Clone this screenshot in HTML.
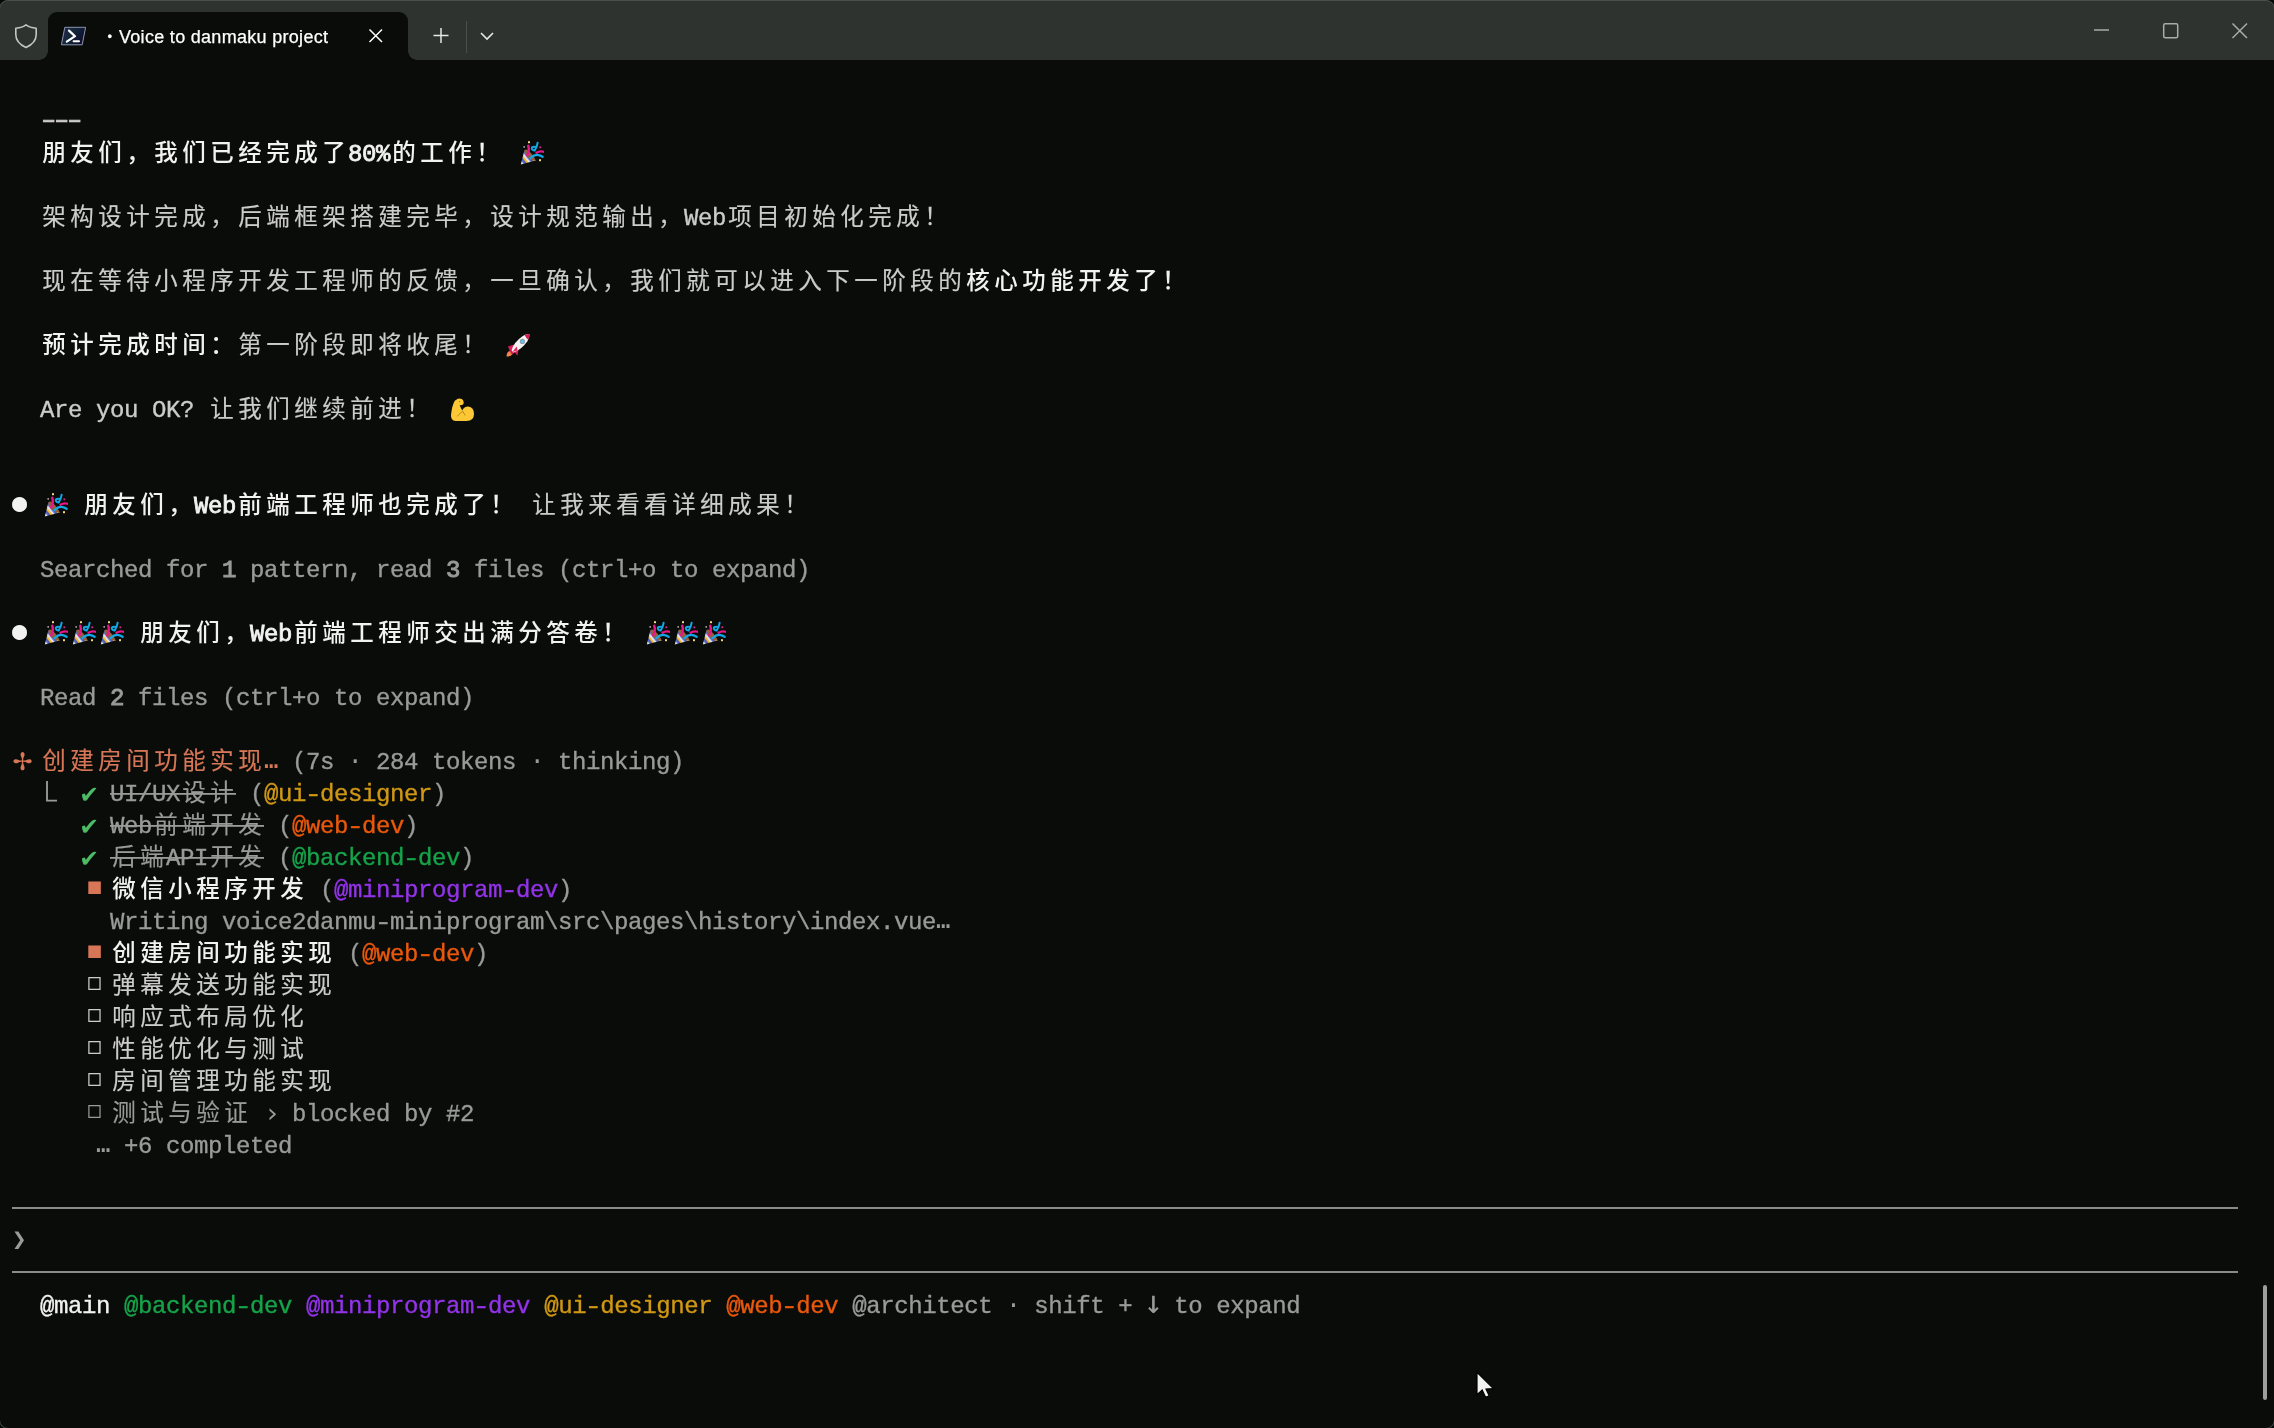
<!DOCTYPE html>
<html lang="zh-CN"><head><meta charset="utf-8"><title>Voice to danmaku project</title>
<style>
html,body{margin:0;padding:0;background:#04090a;}
body{width:2274px;height:1428px;overflow:hidden;position:relative;}
#win{position:absolute;left:0;top:0;width:2274px;height:1428px;background:#0a0c09;overflow:hidden;}
#frame{position:absolute;left:-1px;top:0;width:2276px;height:1429px;box-sizing:border-box;border:1px solid #4b4e4a;border-radius:9px;box-shadow:0 0 0 14px #030a08;pointer-events:none;}
#tb{position:absolute;left:0;top:0;width:2274px;height:60px;background:#2e332f;}
#tab{position:absolute;left:48px;top:12px;width:360px;height:48px;background:#0a0c09;border-radius:9px 9px 0 0;}
#tab:before,#tab:after{content:"";position:absolute;bottom:0;width:9px;height:9px;background:radial-gradient(circle at 0 0,#2e332f 8.5px,#0a0c09 9px);}
#tab:before{left:-9px;}
#tab:after{right:-9px;background:radial-gradient(circle at 100% 0,#2e332f 8.5px,#0a0c09 9px);}
#title{position:absolute;left:119px;top:24.5px;height:24px;line-height:24px;font-family:"Liberation Sans",sans-serif;font-size:18px;letter-spacing:0.3px;color:#fff;white-space:pre;transform:translateZ(0);-webkit-text-stroke:0.25px #fff;}
#title i{position:absolute;left:-11.5px;top:0.5px;font-style:normal;font-size:13px;}
.ico{position:absolute;left:0;top:0;}
#term{position:absolute;left:0;top:0;width:2274px;height:1428px;transform:translateZ(0);font-family:"Liberation Mono","DejaVu Sans Mono","Noto Sans CJK SC",monospace;font-size:24px;letter-spacing:-0.4023px;color:#cccccc;-webkit-text-stroke:0.35px currentColor;}
.r{position:absolute;left:12px;height:32px;line-height:32px;white-space:pre;margin-top:3px;}
.c{font-family:"Noto Sans CJK SC","Liberation Mono",sans-serif;font-size:23.5px;letter-spacing:4.5px;margin-left:2.25px;margin-right:-2.25px;line-height:0;position:relative;top:-0.5px;-webkit-text-stroke:0.15px currentColor;}
.b{color:#f2f2f2;-webkit-text-stroke:0.8px #f2f2f2;}
.b .c{font-weight:500;-webkit-text-stroke:0;}
.s{-webkit-text-stroke:0;}
.bb{-webkit-text-stroke:1px currentColor;}
.w{color:#f2f2f2;}
.d{color:#999b98;}
.o{color:#d77757;}
.g{color:#4eba65;}
.cy{color:#d09814;}
.co{color:#ea580c;}
.cg{color:#16a34a;}
.cp{color:#9333ea;}
.st{background:linear-gradient(currentColor,currentColor) no-repeat 0 11.8px/100% 1.8px;}
.e{display:inline-block;width:28px;height:32px;vertical-align:top;position:relative;letter-spacing:0;margin-top:-3px;}
.e .em{position:absolute;left:4px;top:4.5px;}
.s{display:inline-block;width:14px;height:32px;vertical-align:top;position:relative;letter-spacing:0;text-align:center;margin-top:-3px;font-family:"DejaVu Sans Mono","DejaVu Sans","Noto Sans CJK SC",monospace;}
.hy{display:inline-block;width:14px;letter-spacing:0;text-align:center;transform:scaleX(1.25) translateY(-0.5px);}
.h3{width:13px;transform:scaleX(1.62) translateY(-2.3px);-webkit-text-stroke:0.5px currentColor;position:relative;left:0.6px;}
.dot{font-size:25px;top:-1px;}
.star{font-family:"DejaVu Sans",sans-serif;font-size:24px;left:0.4px;top:1.5px;overflow:visible;}
.s.hook{font-size:19px;left:-2.5px;top:0px;-webkit-text-stroke:1px currentColor;}
.gt{top:-1px;}
.chk{font-size:27px;top:0.5px;overflow:visible;text-indent:-1px;}
.sqf,.sqe{font-size:21px;left:5.5px;top:-1.7px;}
.ra{font-size:27px;top:0.5px;}
.dn{font-size:32px;top:-2.3px;overflow:visible;text-indent:-2.5px;}
.md{top:1.5px;}
.hl{position:absolute;left:12px;width:2226px;height:2px;background:#8a8c89;}
#sb{position:absolute;left:2263px;top:1285px;width:4px;height:115px;border-radius:2px;background:#9c9f9b;}

</style></head><body>
<div id="win">
<div id="tb"><div id="tab"></div>
<svg class="ico" width="2274" height="60" viewBox="0 0 2274 60"><defs><linearGradient id="psg" x1="0" y1="0" x2="1" y2="0.4"><stop offset="0" stop-color="#2a2350"/><stop offset="0.5" stop-color="#12283a"/><stop offset="1" stop-color="#120f30"/></linearGradient></defs>
<path d="M26 24.8 Q29.5 27.6 36.2 28.2 L36.2 34.5 Q36.2 43 26 47.4 Q15.8 43 15.8 34.5 L15.8 28.2 Q22.5 27.6 26 24.8 Z" fill="none" stroke="#c3c6c3" stroke-width="1.6" stroke-linejoin="round"/>
<path d="M64.8 27.3 L85.6 27.3 L82.2 44.8 L61.4 44.8 Z" fill="url(#psg)" stroke="#8c97b0" stroke-width="1"/>
<path d="M69 30.6 L75 36.2 L66.8 41.6" fill="none" stroke="#fff" stroke-width="2.2" stroke-linecap="round" stroke-linejoin="round"/>
<path d="M73.6 41.2 L79 41.2" stroke="#fff" stroke-width="2" stroke-linecap="round"/>
<path d="M369.5 29.5 L382 42 M382 29.5 L369.5 42" stroke="#fff" stroke-width="1.5"/>
<path d="M441 28 L441 43 M433.5 35.5 L448.5 35.5" stroke="#e6e8e6" stroke-width="1.5"/>
<path d="M466.5 21 L466.5 53" stroke="#4a4f4b" stroke-width="1"/>
<path d="M481 33 L487 39 L493 33" fill="none" stroke="#e6e8e6" stroke-width="1.6"/>
<path d="M2094 30 L2109 30" stroke="#a9aca9" stroke-width="1.5"/>
<rect x="2163.7" y="23.7" width="14" height="14" rx="1.5" fill="none" stroke="#a9aca9" stroke-width="1.5"/>
<path d="M2232.5 23.5 L2247 38 M2247 23.5 L2232.5 38" stroke="#a9aca9" stroke-width="1.5"/>
</svg>
<div id="title"><i>•</i>Voice to danmaku project</div>
</div>
<div class="hl" style="top:1207px"></div>
<div class="hl" style="top:1271px"></div>
<div id="sb"></div>
<svg class="ico" style="left:1470px;top:1366px" width="32" height="40" viewBox="1470 1366 32 40"><path d="M1477 1372.3 L1477 1394.6 L1482.2 1390 L1485.6 1397.2 L1489.2 1395.8 L1486 1389 L1493.4 1388.6 Z" fill="#f2f2f0" stroke="#000" stroke-width="1.2" stroke-linejoin="miter"/></svg>
<div id="frame"></div>

<div id="term">
<div class="r" style="top:104px">  <span class="hy h3">-</span><span class="hy h3">-</span><span class="hy h3">-</span></div>
<div class="r" style="top:136px"><span class="b">  <span class="c">朋友们，我们已经完成了</span>80%<span class="c">的工作！</span></span> <span class="e" role="img" aria-label="🎉"><svg class="em" viewBox="0 0 24 24" width="24" height="24"><defs><pattern id="ck" width="6.6" height="6.6" patternUnits="userSpaceOnUse" patternTransform="rotate(52)"><rect width="6.6" height="2.2" fill="#f4b731"/><rect y="2.2" width="6.6" height="2.2" fill="#4a63d8"/><rect y="4.4" width="6.6" height="2.2" fill="#dfe4f5"/></pattern></defs><path d="M0.8 23.4 L4.4 9.2 Q11 12 15.6 19.6 Z" fill="url(#ck)"/><path d="M4.4 9.2 Q6.4 7.4 9 10 Q14.4 15.4 15.6 19.6 Q13 20.4 8.6 17 Q4 12.6 4.4 9.2Z" fill="#93603a"/><path d="M8.2 4.8 Q9.8 9 7.2 14.5" stroke="#e8168a" stroke-width="2.4" fill="none" stroke-linecap="round"/><path d="M17.6 1.8 Q17 6 14.6 9.6 Q11 8.6 12 6.4 Q14 5 16 6.2" stroke="#12a8e6" stroke-width="2" fill="none" stroke-linecap="round"/><path d="M16.4 11.8 Q20 9.6 23.6 10.8" stroke="#e8168a" stroke-width="2.2" fill="none" stroke-linecap="round"/><path d="M10.6 17 Q16 11.6 22.6 15.8" stroke="#12a8e6" stroke-width="2.2" fill="none" stroke-linecap="round"/><rect x="8" y="0.2" width="2" height="2" fill="#f6d77a"/><rect x="19" y="18.2" width="2" height="2" fill="#f6d77a"/><rect x="19.4" y="5.4" width="1.8" height="1.8" fill="#d9268f"/><rect x="3.4" y="5.2" width="1.6" height="1.4" fill="#c8b8b8"/></svg></span></div>
<div class="r" style="top:200px">  <span class="c">架构设计完成，后端框架搭建完毕，设计规范输出，</span>Web<span class="c">项目初始化完成！</span></div>
<div class="r" style="top:264px">  <span class="c">现在等待小程序开发工程师的反馈，一旦确认，我们就可以进入下一阶段的</span><span class="b"><span class="c">核心功能开发了！</span></span></div>
<div class="r" style="top:328px"><span class="b">  <span class="c">预计完成时间：</span></span><span class="c">第一阶段即将收尾！</span> <span class="e" role="img" aria-label="🚀"><svg class="em" viewBox="0 0 24 24" width="24" height="24"><path d="M0.6 23.6 Q0.4 19.4 3.4 18 L6.6 21 Q5 23.8 0.6 23.6Z" fill="#f5854a"/><path d="M2 13.4 L8 11.6 L12.6 16 L11.4 22.8 L9 19.4 L5.4 21.4 L3.6 17.2 Z" fill="#d81f5c"/><path d="M5.6 17.6 Q7.4 9.4 16.8 3 Q20.4 0.6 23.4 1 Q23.8 4.4 21.4 8.2 Q15.6 16.6 7.4 19.4 Z" fill="#f3f3f1"/><path d="M18.6 2 Q21.4 0.6 23.4 1 Q23.8 3.6 22.2 6.8 Q20 5 18.6 2Z" fill="#cf1a5e"/><path d="M6.4 19 L10.6 13.4 L11.6 17.4 Z" fill="#e8295f"/><circle cx="16.4" cy="8.4" r="2.6" fill="#8c9bab"/><circle cx="16.4" cy="8.6" r="1.7" fill="#5cc6f8"/></svg></span></div>
<div class="r" style="top:392px">  Are you OK? <span class="c">让我们继续前进！</span> <span class="e" role="img" aria-label="💪"><svg class="em" viewBox="0 0 24 24" width="24" height="24"><path d="M6.6 2.4 Q9 0.6 11.8 2 Q14.4 3.8 13.4 7 Q12.4 8.6 9.6 8.2 L12.2 13.6 Q14 9.4 18.2 9.4 Q24 10 24 17 Q24 24 16.6 24 L5.6 24 Q0.6 23.6 1 18 Q2 8.4 4.8 3.8 Z" fill="#fcc836"/><path d="M12.4 14.2 L7.2 19.4 M12.6 14.2 L15.2 18.4" stroke="#b07d10" stroke-width="0.9" fill="none"/><circle cx="9.6" cy="4.6" r="0.7" fill="#b07d10"/></svg></span></div>
<div class="r" style="top:488px"><span class="w"><span class="s dot">●</span> </span><span class="e" role="img" aria-label="🎉"><svg class="em" viewBox="0 0 24 24" width="24" height="24"><defs><pattern id="ck" width="6.6" height="6.6" patternUnits="userSpaceOnUse" patternTransform="rotate(52)"><rect width="6.6" height="2.2" fill="#f4b731"/><rect y="2.2" width="6.6" height="2.2" fill="#4a63d8"/><rect y="4.4" width="6.6" height="2.2" fill="#dfe4f5"/></pattern></defs><path d="M0.8 23.4 L4.4 9.2 Q11 12 15.6 19.6 Z" fill="url(#ck)"/><path d="M4.4 9.2 Q6.4 7.4 9 10 Q14.4 15.4 15.6 19.6 Q13 20.4 8.6 17 Q4 12.6 4.4 9.2Z" fill="#93603a"/><path d="M8.2 4.8 Q9.8 9 7.2 14.5" stroke="#e8168a" stroke-width="2.4" fill="none" stroke-linecap="round"/><path d="M17.6 1.8 Q17 6 14.6 9.6 Q11 8.6 12 6.4 Q14 5 16 6.2" stroke="#12a8e6" stroke-width="2" fill="none" stroke-linecap="round"/><path d="M16.4 11.8 Q20 9.6 23.6 10.8" stroke="#e8168a" stroke-width="2.2" fill="none" stroke-linecap="round"/><path d="M10.6 17 Q16 11.6 22.6 15.8" stroke="#12a8e6" stroke-width="2.2" fill="none" stroke-linecap="round"/><rect x="8" y="0.2" width="2" height="2" fill="#f6d77a"/><rect x="19" y="18.2" width="2" height="2" fill="#f6d77a"/><rect x="19.4" y="5.4" width="1.8" height="1.8" fill="#d9268f"/><rect x="3.4" y="5.2" width="1.6" height="1.4" fill="#c8b8b8"/></svg></span> <span class="b"><span class="c">朋友们，</span>Web<span class="c">前端工程师也完成了！</span></span> <span class="c">让我来看看详细成果！</span></div>
<div class="r" style="top:552px"><span class="d">  Searched for </span><span class="d bb">1</span><span class="d"> pattern, read </span><span class="d bb">3</span><span class="d"> files (ctrl+o to expand)</span></div>
<div class="r" style="top:616px"><span class="w"><span class="s dot">●</span> </span><span class="e" role="img" aria-label="🎉"><svg class="em" viewBox="0 0 24 24" width="24" height="24"><defs><pattern id="ck" width="6.6" height="6.6" patternUnits="userSpaceOnUse" patternTransform="rotate(52)"><rect width="6.6" height="2.2" fill="#f4b731"/><rect y="2.2" width="6.6" height="2.2" fill="#4a63d8"/><rect y="4.4" width="6.6" height="2.2" fill="#dfe4f5"/></pattern></defs><path d="M0.8 23.4 L4.4 9.2 Q11 12 15.6 19.6 Z" fill="url(#ck)"/><path d="M4.4 9.2 Q6.4 7.4 9 10 Q14.4 15.4 15.6 19.6 Q13 20.4 8.6 17 Q4 12.6 4.4 9.2Z" fill="#93603a"/><path d="M8.2 4.8 Q9.8 9 7.2 14.5" stroke="#e8168a" stroke-width="2.4" fill="none" stroke-linecap="round"/><path d="M17.6 1.8 Q17 6 14.6 9.6 Q11 8.6 12 6.4 Q14 5 16 6.2" stroke="#12a8e6" stroke-width="2" fill="none" stroke-linecap="round"/><path d="M16.4 11.8 Q20 9.6 23.6 10.8" stroke="#e8168a" stroke-width="2.2" fill="none" stroke-linecap="round"/><path d="M10.6 17 Q16 11.6 22.6 15.8" stroke="#12a8e6" stroke-width="2.2" fill="none" stroke-linecap="round"/><rect x="8" y="0.2" width="2" height="2" fill="#f6d77a"/><rect x="19" y="18.2" width="2" height="2" fill="#f6d77a"/><rect x="19.4" y="5.4" width="1.8" height="1.8" fill="#d9268f"/><rect x="3.4" y="5.2" width="1.6" height="1.4" fill="#c8b8b8"/></svg></span><span class="e" role="img" aria-label="🎉"><svg class="em" viewBox="0 0 24 24" width="24" height="24"><defs><pattern id="ck" width="6.6" height="6.6" patternUnits="userSpaceOnUse" patternTransform="rotate(52)"><rect width="6.6" height="2.2" fill="#f4b731"/><rect y="2.2" width="6.6" height="2.2" fill="#4a63d8"/><rect y="4.4" width="6.6" height="2.2" fill="#dfe4f5"/></pattern></defs><path d="M0.8 23.4 L4.4 9.2 Q11 12 15.6 19.6 Z" fill="url(#ck)"/><path d="M4.4 9.2 Q6.4 7.4 9 10 Q14.4 15.4 15.6 19.6 Q13 20.4 8.6 17 Q4 12.6 4.4 9.2Z" fill="#93603a"/><path d="M8.2 4.8 Q9.8 9 7.2 14.5" stroke="#e8168a" stroke-width="2.4" fill="none" stroke-linecap="round"/><path d="M17.6 1.8 Q17 6 14.6 9.6 Q11 8.6 12 6.4 Q14 5 16 6.2" stroke="#12a8e6" stroke-width="2" fill="none" stroke-linecap="round"/><path d="M16.4 11.8 Q20 9.6 23.6 10.8" stroke="#e8168a" stroke-width="2.2" fill="none" stroke-linecap="round"/><path d="M10.6 17 Q16 11.6 22.6 15.8" stroke="#12a8e6" stroke-width="2.2" fill="none" stroke-linecap="round"/><rect x="8" y="0.2" width="2" height="2" fill="#f6d77a"/><rect x="19" y="18.2" width="2" height="2" fill="#f6d77a"/><rect x="19.4" y="5.4" width="1.8" height="1.8" fill="#d9268f"/><rect x="3.4" y="5.2" width="1.6" height="1.4" fill="#c8b8b8"/></svg></span><span class="e" role="img" aria-label="🎉"><svg class="em" viewBox="0 0 24 24" width="24" height="24"><defs><pattern id="ck" width="6.6" height="6.6" patternUnits="userSpaceOnUse" patternTransform="rotate(52)"><rect width="6.6" height="2.2" fill="#f4b731"/><rect y="2.2" width="6.6" height="2.2" fill="#4a63d8"/><rect y="4.4" width="6.6" height="2.2" fill="#dfe4f5"/></pattern></defs><path d="M0.8 23.4 L4.4 9.2 Q11 12 15.6 19.6 Z" fill="url(#ck)"/><path d="M4.4 9.2 Q6.4 7.4 9 10 Q14.4 15.4 15.6 19.6 Q13 20.4 8.6 17 Q4 12.6 4.4 9.2Z" fill="#93603a"/><path d="M8.2 4.8 Q9.8 9 7.2 14.5" stroke="#e8168a" stroke-width="2.4" fill="none" stroke-linecap="round"/><path d="M17.6 1.8 Q17 6 14.6 9.6 Q11 8.6 12 6.4 Q14 5 16 6.2" stroke="#12a8e6" stroke-width="2" fill="none" stroke-linecap="round"/><path d="M16.4 11.8 Q20 9.6 23.6 10.8" stroke="#e8168a" stroke-width="2.2" fill="none" stroke-linecap="round"/><path d="M10.6 17 Q16 11.6 22.6 15.8" stroke="#12a8e6" stroke-width="2.2" fill="none" stroke-linecap="round"/><rect x="8" y="0.2" width="2" height="2" fill="#f6d77a"/><rect x="19" y="18.2" width="2" height="2" fill="#f6d77a"/><rect x="19.4" y="5.4" width="1.8" height="1.8" fill="#d9268f"/><rect x="3.4" y="5.2" width="1.6" height="1.4" fill="#c8b8b8"/></svg></span> <span class="b"><span class="c">朋友们，</span>Web<span class="c">前端工程师交出满分答卷！</span></span> <span class="e" role="img" aria-label="🎉"><svg class="em" viewBox="0 0 24 24" width="24" height="24"><defs><pattern id="ck" width="6.6" height="6.6" patternUnits="userSpaceOnUse" patternTransform="rotate(52)"><rect width="6.6" height="2.2" fill="#f4b731"/><rect y="2.2" width="6.6" height="2.2" fill="#4a63d8"/><rect y="4.4" width="6.6" height="2.2" fill="#dfe4f5"/></pattern></defs><path d="M0.8 23.4 L4.4 9.2 Q11 12 15.6 19.6 Z" fill="url(#ck)"/><path d="M4.4 9.2 Q6.4 7.4 9 10 Q14.4 15.4 15.6 19.6 Q13 20.4 8.6 17 Q4 12.6 4.4 9.2Z" fill="#93603a"/><path d="M8.2 4.8 Q9.8 9 7.2 14.5" stroke="#e8168a" stroke-width="2.4" fill="none" stroke-linecap="round"/><path d="M17.6 1.8 Q17 6 14.6 9.6 Q11 8.6 12 6.4 Q14 5 16 6.2" stroke="#12a8e6" stroke-width="2" fill="none" stroke-linecap="round"/><path d="M16.4 11.8 Q20 9.6 23.6 10.8" stroke="#e8168a" stroke-width="2.2" fill="none" stroke-linecap="round"/><path d="M10.6 17 Q16 11.6 22.6 15.8" stroke="#12a8e6" stroke-width="2.2" fill="none" stroke-linecap="round"/><rect x="8" y="0.2" width="2" height="2" fill="#f6d77a"/><rect x="19" y="18.2" width="2" height="2" fill="#f6d77a"/><rect x="19.4" y="5.4" width="1.8" height="1.8" fill="#d9268f"/><rect x="3.4" y="5.2" width="1.6" height="1.4" fill="#c8b8b8"/></svg></span><span class="e" role="img" aria-label="🎉"><svg class="em" viewBox="0 0 24 24" width="24" height="24"><defs><pattern id="ck" width="6.6" height="6.6" patternUnits="userSpaceOnUse" patternTransform="rotate(52)"><rect width="6.6" height="2.2" fill="#f4b731"/><rect y="2.2" width="6.6" height="2.2" fill="#4a63d8"/><rect y="4.4" width="6.6" height="2.2" fill="#dfe4f5"/></pattern></defs><path d="M0.8 23.4 L4.4 9.2 Q11 12 15.6 19.6 Z" fill="url(#ck)"/><path d="M4.4 9.2 Q6.4 7.4 9 10 Q14.4 15.4 15.6 19.6 Q13 20.4 8.6 17 Q4 12.6 4.4 9.2Z" fill="#93603a"/><path d="M8.2 4.8 Q9.8 9 7.2 14.5" stroke="#e8168a" stroke-width="2.4" fill="none" stroke-linecap="round"/><path d="M17.6 1.8 Q17 6 14.6 9.6 Q11 8.6 12 6.4 Q14 5 16 6.2" stroke="#12a8e6" stroke-width="2" fill="none" stroke-linecap="round"/><path d="M16.4 11.8 Q20 9.6 23.6 10.8" stroke="#e8168a" stroke-width="2.2" fill="none" stroke-linecap="round"/><path d="M10.6 17 Q16 11.6 22.6 15.8" stroke="#12a8e6" stroke-width="2.2" fill="none" stroke-linecap="round"/><rect x="8" y="0.2" width="2" height="2" fill="#f6d77a"/><rect x="19" y="18.2" width="2" height="2" fill="#f6d77a"/><rect x="19.4" y="5.4" width="1.8" height="1.8" fill="#d9268f"/><rect x="3.4" y="5.2" width="1.6" height="1.4" fill="#c8b8b8"/></svg></span><span class="e" role="img" aria-label="🎉"><svg class="em" viewBox="0 0 24 24" width="24" height="24"><defs><pattern id="ck" width="6.6" height="6.6" patternUnits="userSpaceOnUse" patternTransform="rotate(52)"><rect width="6.6" height="2.2" fill="#f4b731"/><rect y="2.2" width="6.6" height="2.2" fill="#4a63d8"/><rect y="4.4" width="6.6" height="2.2" fill="#dfe4f5"/></pattern></defs><path d="M0.8 23.4 L4.4 9.2 Q11 12 15.6 19.6 Z" fill="url(#ck)"/><path d="M4.4 9.2 Q6.4 7.4 9 10 Q14.4 15.4 15.6 19.6 Q13 20.4 8.6 17 Q4 12.6 4.4 9.2Z" fill="#93603a"/><path d="M8.2 4.8 Q9.8 9 7.2 14.5" stroke="#e8168a" stroke-width="2.4" fill="none" stroke-linecap="round"/><path d="M17.6 1.8 Q17 6 14.6 9.6 Q11 8.6 12 6.4 Q14 5 16 6.2" stroke="#12a8e6" stroke-width="2" fill="none" stroke-linecap="round"/><path d="M16.4 11.8 Q20 9.6 23.6 10.8" stroke="#e8168a" stroke-width="2.2" fill="none" stroke-linecap="round"/><path d="M10.6 17 Q16 11.6 22.6 15.8" stroke="#12a8e6" stroke-width="2.2" fill="none" stroke-linecap="round"/><rect x="8" y="0.2" width="2" height="2" fill="#f6d77a"/><rect x="19" y="18.2" width="2" height="2" fill="#f6d77a"/><rect x="19.4" y="5.4" width="1.8" height="1.8" fill="#d9268f"/><rect x="3.4" y="5.2" width="1.6" height="1.4" fill="#c8b8b8"/></svg></span></div>
<div class="r" style="top:680px"><span class="d">  Read </span><span class="d bb">2</span><span class="d"> files (ctrl+o to expand)</span></div>
<div class="r" style="top:744px"><span class="o"><span class="s star">✢</span> <span class="c">创建房间功能实现</span><span class="s el">…</span> </span><span class="d">(7s <span class="s md">·</span> 284 tokens <span class="s md">·</span> thinking)</span></div>
<div class="r" style="top:776px"><span class="d">  <span class="s hook">⎿</span>  </span><span class="g"><span class="s chk">✔</span> </span><span class="d st">UI/UX<span class="c">设计</span></span><span class="d"> (</span><span class="cy">@ui<span class="hy">-</span>designer</span><span class="d">)</span></div>
<div class="r" style="top:808px"><span class="g">     <span class="s chk">✔</span> </span><span class="d st">Web<span class="c">前端开发</span></span><span class="d"> (</span><span class="co">@web<span class="hy">-</span>dev</span><span class="d">)</span></div>
<div class="r" style="top:840px"><span class="g">     <span class="s chk">✔</span> </span><span class="d st"><span class="c">后端</span>API<span class="c">开发</span></span><span class="d"> (</span><span class="cg">@backend<span class="hy">-</span>dev</span><span class="d">)</span></div>
<div class="r" style="top:872px"><span class="o">     <span class="s sqf">■</span> </span><span class="b"><span class="c">微信小程序开发</span></span><span class="d"> (</span><span class="cp">@miniprogram<span class="hy">-</span>dev</span><span class="d">)</span></div>
<div class="r" style="top:904px"><span class="d">       Writing voice2danmu<span class="hy">-</span>miniprogram\src\pages\history\index.vue<span class="s el">…</span></span></div>
<div class="r" style="top:936px"><span class="o">     <span class="s sqf">■</span> </span><span class="b"><span class="c">创建房间功能实现</span></span><span class="d"> (</span><span class="co">@web<span class="hy">-</span>dev</span><span class="d">)</span></div>
<div class="r" style="top:968px">     <span class="s sqe">□</span> <span class="c">弹幕发送功能实现</span></div>
<div class="r" style="top:1000px">     <span class="s sqe">□</span> <span class="c">响应式布局优化</span></div>
<div class="r" style="top:1032px">     <span class="s sqe">□</span> <span class="c">性能优化与测试</span></div>
<div class="r" style="top:1064px">     <span class="s sqe">□</span> <span class="c">房间管理功能实现</span></div>
<div class="r" style="top:1096px"><span class="d">     <span class="s sqe">□</span> <span class="c">测试与验证</span> <span class="s ra">›</span> blocked by #2</span></div>
<div class="r" style="top:1128px"><span class="d">      <span class="s el">…</span> +6 completed</span></div>
<div class="r" style="top:1224px"><span class="d"><span class="s gt">❯</span></span></div>
<div class="r" style="top:1288px"><span class="w">  @main</span> <span class="cg">@backend<span class="hy">-</span>dev</span> <span class="cp">@miniprogram<span class="hy">-</span>dev</span> <span class="cy">@ui<span class="hy">-</span>designer</span> <span class="co">@web<span class="hy">-</span>dev</span> <span class="d">@architect <span class="s md">·</span> shift + <span class="s dn">↓</span> to expand</span></div>
</div>
</div>
</body></html>
